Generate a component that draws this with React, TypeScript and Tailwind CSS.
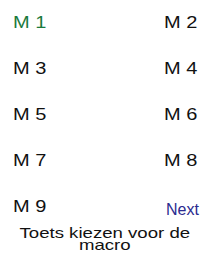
import React from 'react';

const macros = ['M 1', 'M 2', 'M 3', 'M 4', 'M 5', 'M 6', 'M 7', 'M 8', 'M 9'];

const App = () => {
  return (
    <div className="w-[210px] h-[262px] bg-white overflow-hidden font-['Liberation_Sans',Arial,sans-serif]">
      {/* Macro grid */}
      <div className="grid grid-cols-[1fr_46px] gap-y-[16px] pt-[8px] pl-[13px]">
        {macros.map((label, i) => (
          <div key={label} className="h-[30px] flex items-center">
            <span
              className={`inline-block origin-left scale-x-[1.25] text-[16px] leading-none ${
                i === 0 ? 'text-[#1a7a3c]' : 'text-[#111111]'
              }`}
            >
              {label}
            </span>
          </div>
        ))}
        <div className="h-[30px] flex items-center pt-[5px]">
          <span className="text-[16px] leading-none text-[#2b2b8f] ml-[2px]">Next</span>
        </div>
      </div>

      {/* Footer */}
      <div className="flex justify-center mt-[5px]">
        <p className="scale-x-[1.24] text-center text-[15px] leading-[12px] text-[#111111]">
          Toets kiezen voor de
          <br />
          macro
        </p>
      </div>
    </div>
  );
};

export default App;
